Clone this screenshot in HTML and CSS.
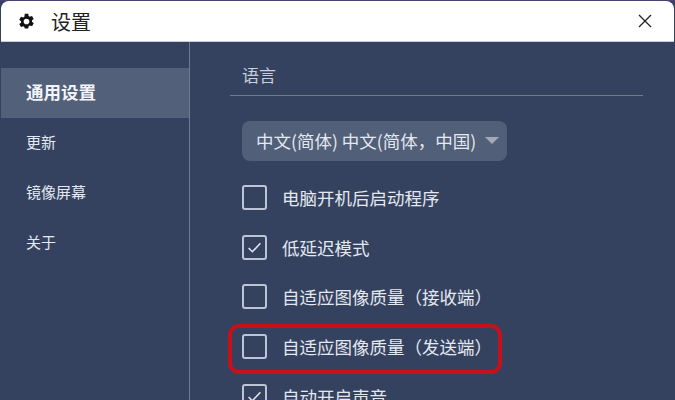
FILE: index.html
```html
<!DOCTYPE html>
<html lang="zh-CN">
<head>
    <meta charset="UTF-8">
    <title>设置</title>
    <link rel="stylesheet" href="styles.css">
</head>
<body>
    <div class="window">
        <div class="titlebar">
            <svg class="gear" viewBox="0 0 24 24" width="17" height="17">
                <path fill="#111" fill-rule="evenodd" d="M9.600 1h4.800l.6 3.200 1.700 1 3.100-1.100 2.400 4.200-2.500 2.100v2l2.500 2.100-2.400 4.200-3.100-1.100-1.700 1-.6 3.200H9.600L9 19.800l-1.700-1-3.100 1.100-2.400-4.200 2.500-2.100v-2L1.800 9.500l2.400-4.200 3.100 1.100 1.700-1zM12 8a4 4 0 1 0 0 8 4 4 0 0 0 0-8z"/>
            </svg>
            <span class="title">设置</span>
            <svg class="close" viewBox="0 0 14 14" width="14" height="14">
                <path d="M1 1l12 12M13 1L1 13" stroke="#222" stroke-width="1.300" fill="none"/>
            </svg>
        </div>
        <div class="main">
            <div class="sidebar">
                <div class="nav-item active">通用设置</div>
                <div class="nav-item">更新</div>
                <div class="nav-item">镜像屏幕</div>
                <div class="nav-item">关于</div>
            </div>
            <div class="content">
                <div class="section-title">语言</div>
                <div class="select">
                    <span>中文(简体) 中文(简体，中国)</span>
                    <i class="caret"></i>
                </div>
                <div class="option"><span class="checkbox"></span>电脑开机后启动程序</div>
                <div class="option">
                    <span class="checkbox">
                        <svg viewBox="0 0 14 14" width="15" height="15"><path d="M1.500 7.500l3.500 3.500 7.500-8" stroke="#e4e8f0" stroke-width="1.400" fill="none"/></svg>
                    </span>低延迟模式
                </div>
                <div class="option"><span class="checkbox"></span>自适应图像质量（接收端）</div>
                <div class="option highlighted"><span class="checkbox"></span>自适应图像质量（发送端）</div>
                <div class="option">
                    <span class="checkbox">
                        <svg viewBox="0 0 14 14" width="15" height="15"><path d="M1.500 7.500l3.500 3.500 7.500-8" stroke="#e4e8f0" stroke-width="1.400" fill="none"/></svg>
                    </span>自动开启声音
                </div>
            </div>
        </div>
    </div>
</body>
</html>
```

FILE: styles.css
```css
html, body {
    margin: 0;
    padding: 0;
    height: 400px;
    overflow: hidden;
    background: #35425f;
}
body {
    font-family: "Noto Sans CJK SC", "Liberation Sans", sans-serif;
    color: #e4e8f0;
}
.window {
    height: 400px;
    display: flex;
    flex-direction: column;
    border-top: 1px solid #4a4270;
    box-sizing: border-box;
}
.titlebar {
    height: 40px;
    flex: none;
    margin: 0 1px;
    display: flex;
    align-items: center;
    background: #fff;
    border-radius: 8px 8px 0 0;
    border-bottom: 1px solid #c9cedb;
    color: #222;
}
.gear {
    margin-left: 17px;
}
.title {
    margin-left: 16px;
    font-size: 20px;
}
.close {
    margin-left: auto;
    margin-right: 22px;
}
.main {
    flex: 1;
    display: flex;
    min-height: 0;
}
.sidebar {
    width: 188px;
    flex: none;
    margin-left: 1px;
    padding-top: 26px;
    border-right: 1px solid #6f7a92;
}
.nav-item {
    height: 50px;
    line-height: 48px;
    padding-left: 25px;
    font-size: 15px;
}
.nav-item.active {
    background: #53607a;
    font-weight: 700;
    font-size: 17.500px;
    color: #f2f4f8;
}
.content {
    flex: 1;
    padding: 0 32px 0 52px;
    min-width: 0;
}
.section-title {
    height: 54px;
    line-height: 66px;
    box-sizing: border-box;
    margin-left: -12px;
    padding-left: 12px;
    border-bottom: 1px solid #6f7a92;
    font-size: 17px;
    color: #c9cfdb;
}
.select {
    width: 265px;
    height: 40px;
    margin-top: 25px;
    margin-bottom: 12px;
    box-sizing: border-box;
    padding: 0 8px 2px 14px;
    display: flex;
    align-items: center;
    justify-content: space-between;
    border-radius: 8px;
    background: #525f79;
    font-size: 17.500px;
    white-space: nowrap;
}
.caret {
    border-left: 7px solid transparent;
    border-right: 7px solid transparent;
    border-top: 7px solid #a3a9b6;
}
.option {
    position: relative;
    height: 49.600px;
    display: flex;
    align-items: center;
    font-size: 17.500px;
    white-space: nowrap;
}
.checkbox {
    width: 25px;
    height: 25px;
    flex: none;
    margin-right: 15px;
    box-sizing: border-box;
    display: flex;
    align-items: center;
    justify-content: center;
    border: 2px solid #bcc5d6;
    border-radius: 3px;
}
.highlighted::after {
    content: "";
    position: absolute;
    left: -14px;
    top: 2px;
    width: 274px;
    height: 50px;
    box-sizing: border-box;
    border: 4px solid #c8101c;
    border-radius: 11px;
}
```
